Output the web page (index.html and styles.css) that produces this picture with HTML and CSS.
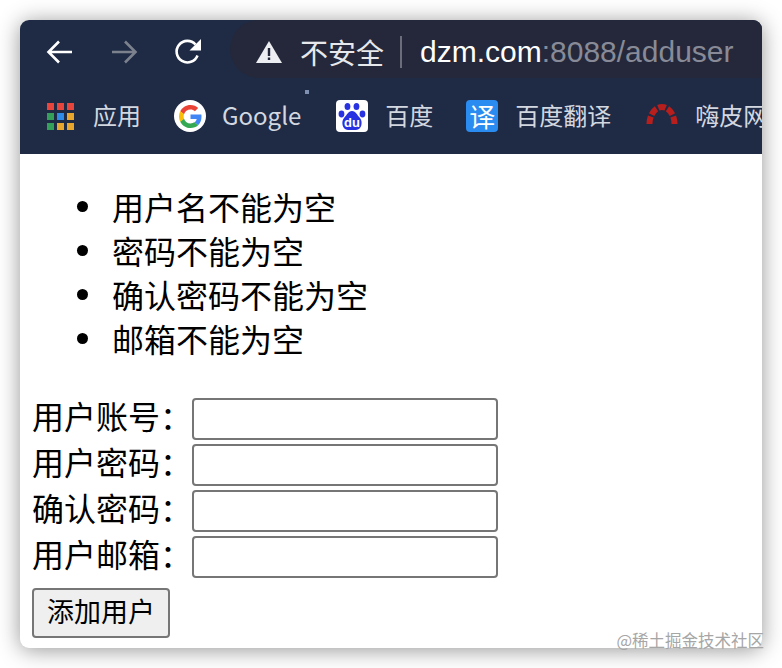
FILE: index.html
```html
<!DOCTYPE html>
<html lang="zh-CN">
<head>
  <meta charset="UTF-8" />
  <title>添加用户</title>
  <link rel="stylesheet" href="styles.css">
</head>
<body>
  <div class="window">
    <header class="toolbar">
      <div class="nav-row">
        <svg class="nav-icon" viewBox="0 0 28 28"><path d="M26 14H3M13 3.500 2.500 14 13 24.500" fill="none" stroke="#fff" stroke-width="2.600"/></svg>
        <svg class="nav-icon nav-off" viewBox="0 0 28 28"><path d="M2 14h23M15 3.500 25.500 14 15 24.500" fill="none" stroke="#7b818d" stroke-width="2.600"/></svg>
        <svg class="nav-icon" viewBox="0 0 28 28"><path d="M23.500 17.500A10.800 10.800 0 1 1 21.500 6.500" fill="none" stroke="#fff" stroke-width="2.600"/><path d="M27 1v11.500H15.500z" fill="#fff"/></svg>
        <div class="address">
          <svg class="warn" viewBox="0 0 26 22"><path d="M13 0 26 22H0z" fill="#eceef2"/><rect x="11.800" y="7" width="2.400" height="8" fill="#24283a"/><rect x="11.800" y="16.500" width="2.400" height="2.500" fill="#24283a"/></svg>
          <span class="unsafe">不安全</span>
          <span class="divider"></span>
          <span class="url">dzm.com<span class="url-rest">:8088/adduser</span></span>
        </div>
      </div>
      <nav class="bookmarks">
        <a class="mark">
          <svg class="apps" viewBox="0 0 27 27">
            <rect width="7" height="7" fill="#e8453c"/><rect x="10" width="7" height="7" fill="#e8453c"/><rect x="20" width="7" height="7" fill="#e8453c"/>
            <rect y="10" width="7" height="7" fill="#34a05a"/><rect x="10" y="10" width="7" height="7" fill="#2f8be8"/><rect x="20" y="10" width="7" height="7" fill="#e8a62c"/>
            <rect y="20" width="7" height="7" fill="#34a05a"/><rect x="10" y="20" width="7" height="7" fill="#e8a62c"/><rect x="20" y="20" width="7" height="7" fill="#e8a62c"/>
          </svg>
          <span class="mark-text">应用</span>
        </a>
        <a class="mark mark-google">
          <span class="favicon google">
            <svg viewBox="0 0 48 48">
              <path fill="#EA4335" d="M24 9.500c3.540 0 6.710 1.220 9.210 3.600l6.850-6.850C35.900 2.380 30.470 0 24 0 14.620 0 6.510 5.380 2.560 13.220l7.980 6.190C12.430 13.720 17.740 9.500 24 9.500z"/>
              <path fill="#4285F4" d="M46.980 24.550c0-1.570-.15-3.090-.38-4.550H24v9.020h12.940c-.58 2.960-2.260 5.480-4.780 7.180l7.730 6c4.510-4.180 7.090-10.360 7.090-17.650z"/>
              <path fill="#FBBC05" d="M10.530 28.590c-.48-1.450-.76-2.990-.76-4.590s.27-3.140.76-4.590l-7.980-6.190C.92 16.460 0 20.120 0 24c0 3.880.92 7.540 2.560 10.780l7.970-6.190z"/>
              <path fill="#34A853" d="M24 48c6.480 0 11.930-2.130 15.890-5.810l-7.730-6c-2.150 1.450-4.920 2.300-8.160 2.300-6.260 0-11.570-4.220-13.470-9.910l-7.980 6.190C6.510 42.620 14.620 48 24 48z"/>
            </svg>
          </span>
          <span class="mark-text">Google</span>
        </a>
        <a class="mark">
          <span class="favicon baidu">
            <svg viewBox="0 0 32 32">
              <ellipse cx="5.500" cy="14" rx="2.900" ry="3.400" fill="#2932e1"/>
              <ellipse cx="11.500" cy="6.500" rx="2.900" ry="3.600" fill="#2932e1"/>
              <ellipse cx="20.500" cy="6.500" rx="2.900" ry="3.600" fill="#2932e1"/>
              <ellipse cx="26.500" cy="14" rx="2.900" ry="3.400" fill="#2932e1"/>
              <path d="M16 11c-4 0-5 4-8 7-3 3-2 12 4 12h8c6 0 7-9 4-12-3-3-4-7-8-7z" fill="#2932e1"/>
              <text x="16" y="27" class="du">du</text>
            </svg>
          </span>
          <span class="mark-text">百度</span>
        </a>
        <a class="mark mark-fanyi">
          <span class="favicon fanyi">译</span>
          <span class="mark-text">百度翻译</span>
        </a>
        <a class="mark">
          <span class="favicon redmine">
            <svg viewBox="0 0 32 32">
              <path d="M3.500 24A12.500 17 0 0 1 28.500 24" pathLength="45" fill="none" stroke="#b81f1c" stroke-width="6" stroke-dasharray="7.400 2"/>
            </svg>
          </span>
          <span class="mark-text">嗨皮网</span>
        </a>
      </nav>
      <span class="speck"></span>
    </header>

    <main class="content">
      <ul class="errors">
        <li>用户名不能为空</li>
        <li>密码不能为空</li>
        <li>确认密码不能为空</li>
        <li>邮箱不能为空</li>
      </ul>
      <form class="user-form">
        <div class="form-row"><label for="account">用户账号：</label><input id="account" type="text" /></div>
        <div class="form-row"><label for="password">用户密码：</label><input id="password" type="password" /></div>
        <div class="form-row"><label for="confirm">确认密码：</label><input id="confirm" type="password" /></div>
        <div class="form-row"><label for="email">用户邮箱：</label><input id="email" type="text" /></div>
        <button type="button" class="btn-add">添加用户</button>
      </form>
    </main>
  </div>
  <span class="watermark">@稀土掘金技术社区</span>
</body>
</html>
```

FILE: styles.css
```css
:root {
  --toolbar-bg: #1f2b45;
  --address-bg: #24283a;
  --mark-text: #d3d8e0;
  --control-border: #767676;
}

* {
  box-sizing: border-box;
}

html, body {
  height: 100%;
}

body {
  margin: 0;
  padding: 20px;
  background: #fff;
  color: #000;
  font-family: "Noto Sans CJK SC", "Liberation Sans", sans-serif;
  position: relative;
  overflow: hidden;
}

.window {
  width: 742px;
  height: 628px;
  border-radius: 9px;
  overflow: hidden;
  background: #fff;
  box-shadow: 0 2px 22px rgba(0, 0, 0, 0.42);
  display: flex;
  flex-direction: column;
}

/* Browser toolbar */
.toolbar {
  height: 134px;
  flex-shrink: 0;
  background: var(--toolbar-bg);
  display: flex;
  flex-direction: column;
  position: relative;
}

.nav-row {
  height: 58px;
  padding-left: 26px;
  display: flex;
  align-items: center;
}

.nav-icon {
  width: 28px;
  height: 28px;
  margin-right: 36px;
  margin-top: 6px;
  flex-shrink: 0;
}

.address {
  flex: 1;
  align-self: stretch;
  margin-left: -8px;
  padding-left: 26px;
  padding-top: 5px;
  background: var(--address-bg);
  border-radius: 29px 0 0 29px;
  display: flex;
  align-items: center;
}

.warn {
  width: 26px;
  height: 22px;
  flex-shrink: 0;
}

.unsafe {
  margin-left: 18px;
  font-size: 28px;
  line-height: 34px;
  color: #e6e8ec;
}

.divider {
  width: 2px;
  height: 32px;
  margin: 0 18px 0 16px;
  background: #6b6e7a;
}

.url {
  font-family: "Liberation Sans", sans-serif;
  font-size: 30px;
  line-height: 34px;
  color: #fff;
  white-space: nowrap;
}

.url-rest {
  color: #888b97;
}

.bookmarks {
  flex: 1;
  padding-left: 27px;
  display: flex;
  align-items: center;
  overflow: hidden;
  white-space: nowrap;
  color: var(--mark-text);
  font-size: 24px;
}

.mark {
  display: flex;
  align-items: center;
  flex-shrink: 0;
  margin-right: 33px;
}

.mark-google {
  margin-right: 35px;
}

.mark-fanyi {
  margin-right: 35px;
}

.mark-text {
  padding-bottom: 4px;
}

.apps {
  width: 27px;
  height: 27px;
  margin-right: 19px;
}

.favicon {
  width: 32px;
  height: 32px;
  margin-right: 17px;
  border-radius: 4px;
  flex-shrink: 0;
  display: flex;
  align-items: center;
  justify-content: center;
}

.google {
  background: #fff;
  border-radius: 50%;
  margin-right: 16px;
}

.google svg {
  width: 23px;
  height: 23px;
}

.baidu {
  background: #fff;
}

.baidu svg,
.redmine svg {
  width: 32px;
  height: 32px;
}

.du {
  font-family: "Liberation Sans", sans-serif;
  font-size: 13px;
  font-weight: 700;
  fill: #fff;
  text-anchor: middle;
}

.fanyi {
  background: #2a8cf0;
  color: #fff;
  font-size: 26px;
  line-height: 32px;
}

.speck {
  position: absolute;
  left: 285px;
  top: 70px;
  width: 4px;
  height: 4px;
  background: #7f8fb0;
}

/* Page content */
.content {
  flex: 1;
  padding: 30px 0 0 12px;
}

.errors {
  margin: 0 0 38px;
  padding-left: 45px;
  list-style: none;
  font-size: 32px;
  line-height: 44px;
}

.errors li {
  display: flex;
  align-items: center;
}

.errors li::before {
  content: "";
  width: 11px;
  height: 11px;
  margin-right: 24px;
  border-radius: 50%;
  background: #000;
}

.form-row {
  display: flex;
  align-items: flex-start;
  margin-bottom: 4px;
}

.form-row label {
  width: 160px;
  font-size: 32px;
  line-height: 34px;
  white-space: nowrap;
}

.form-row input {
  width: 306px;
  height: 42px;
  border: 2px solid var(--control-border);
  border-radius: 4px;
  background: #fff;
}

.btn-add {
  display: block;
  width: 138px;
  height: 50px;
  margin-top: 10px;
  padding: 0 0 4px;
  border: 2px solid var(--control-border);
  border-radius: 4px;
  background: #efefef;
  color: #000;
  font-family: inherit;
  font-size: 27px;
  line-height: 34px;
}

.watermark {
  position: absolute;
  right: 18px;
  bottom: 18px;
  font-size: 16.500px;
  line-height: 20px;
  color: #a6a6a6;
  white-space: nowrap;
}
```
